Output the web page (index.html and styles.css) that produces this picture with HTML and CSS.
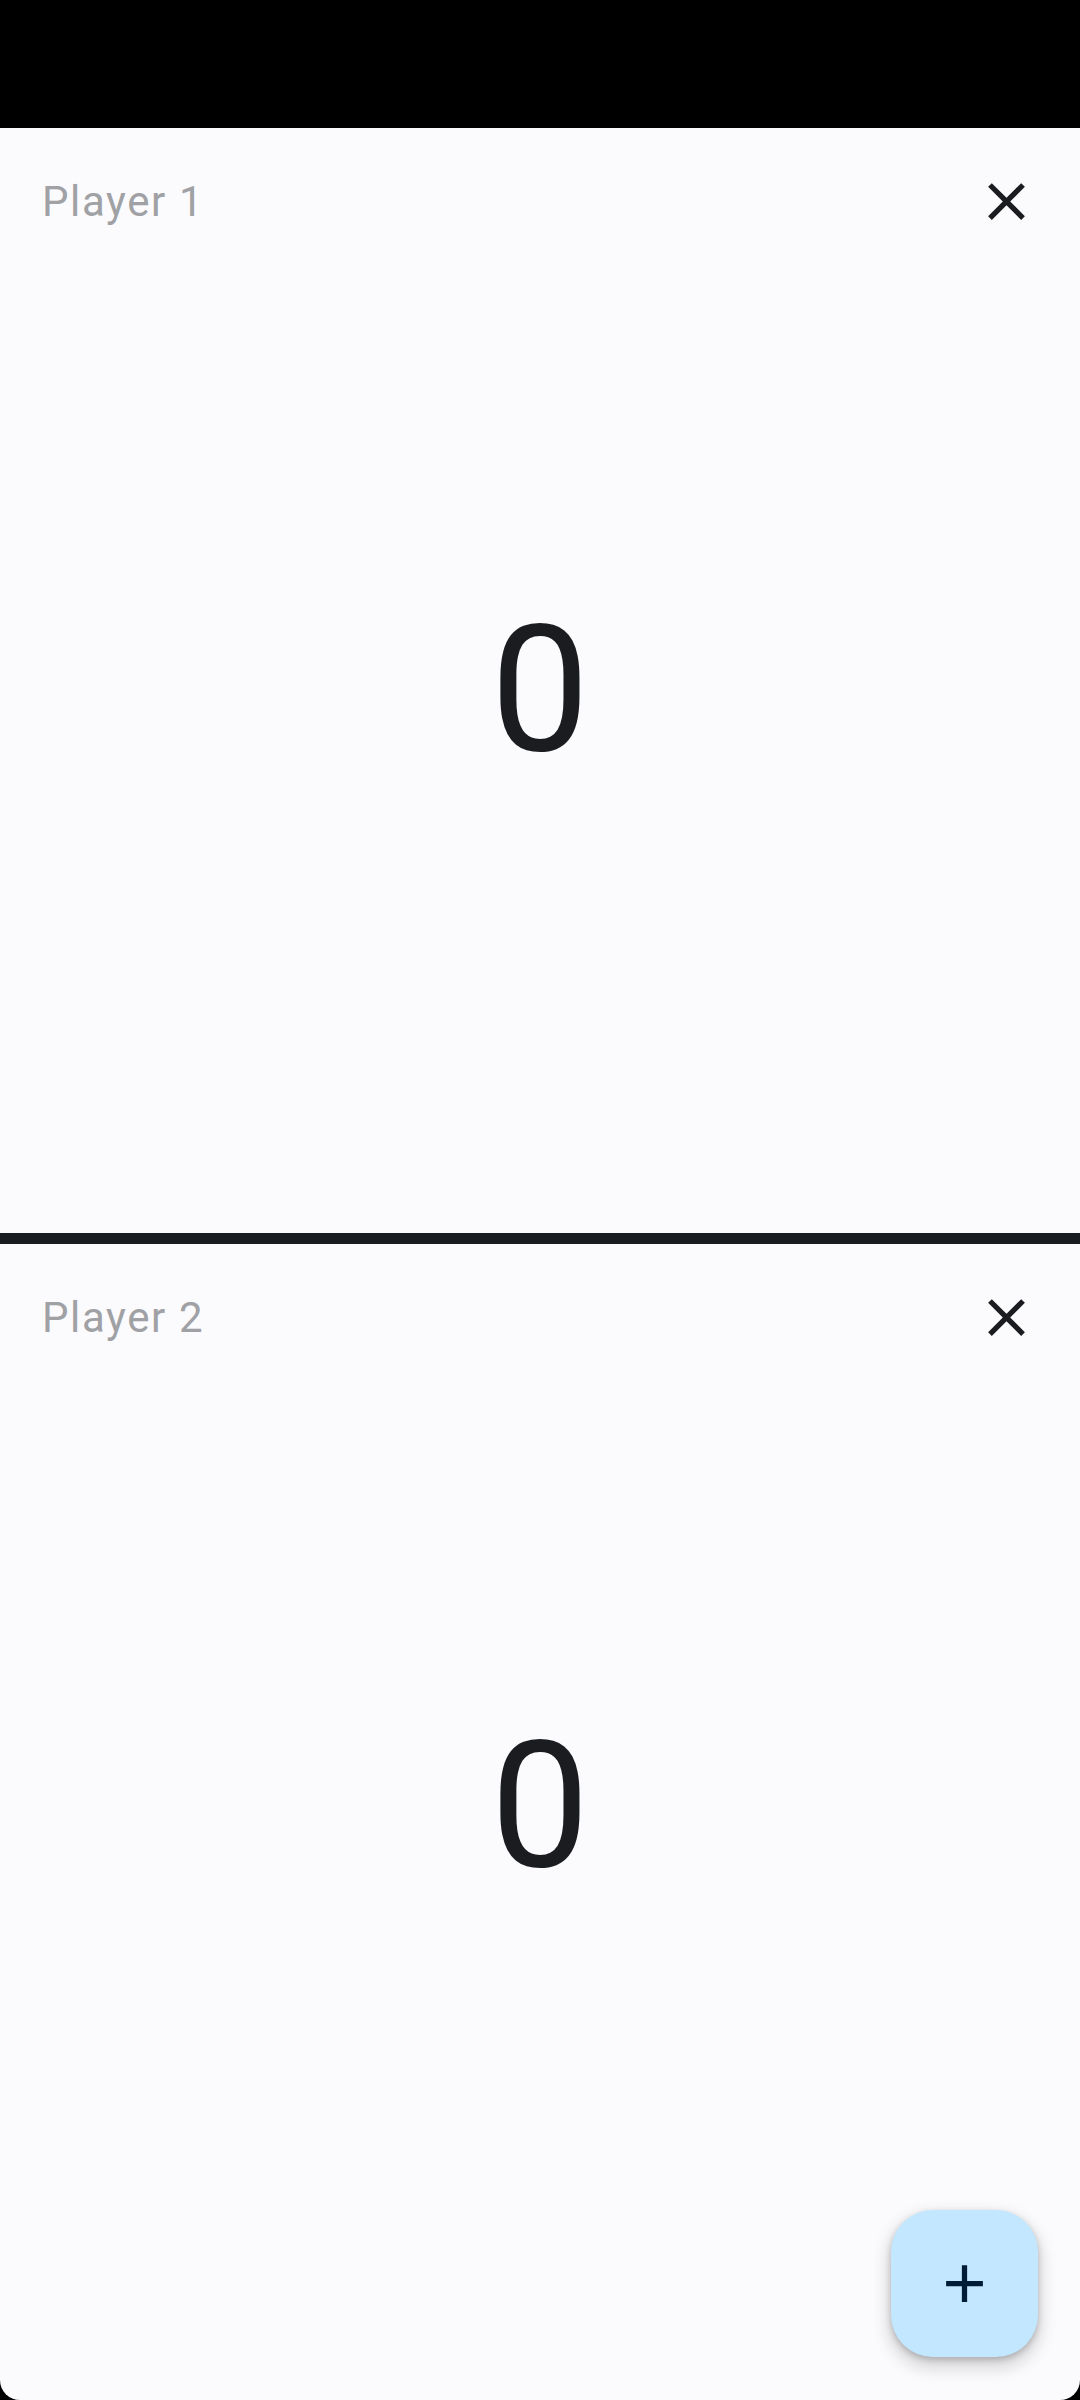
FILE: index.html
```html
<!DOCTYPE html>
<html lang="en">
<head>
<meta charset="utf-8">
<title>Score Counter</title>
<link rel="stylesheet" href="styles.css">
</head>
<body>
<div class="status-bar"></div>
<main class="app">
  <section class="panel">
    <header class="panel-header">
      <span class="player-name">Player 1</span>
      <button class="icon-btn" aria-label="Remove player">
        <svg viewBox="0 0 24 24" width="63" height="63"><path fill="#1a1c1f" d="M19 6.41L17.59 5 12 10.59 6.41 5 5 6.41 10.59 12 5 17.59 6.41 19 12 13.41 17.59 19 19 17.59 13.41 12z"/></svg>
      </button>
    </header>
    <div class="score">0</div>
  </section>
  <div class="divider"></div>
  <section class="panel">
    <header class="panel-header">
      <span class="player-name">Player 2</span>
      <button class="icon-btn" aria-label="Remove player">
        <svg viewBox="0 0 24 24" width="63" height="63"><path fill="#1a1c1f" d="M19 6.41L17.59 5 12 10.59 6.41 5 5 6.41 10.59 12 5 17.59 6.41 19 12 13.41 17.59 19 19 17.59 13.41 12z"/></svg>
      </button>
    </header>
    <div class="score">0</div>
  </section>
  <div class="nav-inset"></div>
  <button class="fab" aria-label="Add player">
    <svg viewBox="0 0 24 24" width="63" height="63"><path fill="#001d35" d="M19 13h-6v6h-2v-6H5v-2h6V5h2v6h6v2z"/></svg>
  </button>
</main>
</body>
</html>
```

FILE: styles.css
```css
* {
  box-sizing: border-box;
}

html, body {
  margin: 0;
  padding: 0;
  background: #000;
}

body {
  width: 1080px;
  height: 2400px;
  overflow: hidden;
  font-family: Roboto, "Noto Sans", "Liberation Sans", sans-serif;
  display: flex;
  flex-direction: column;
}

.status-bar {
  height: 128px;
  background: #000;
  flex: none;
}

.app {
  position: relative;
  flex: 1;
  display: flex;
  flex-direction: column;
  background: #fbfbfe;
  border-radius: 0 0 20px 20px;
  overflow: hidden;
}

.panel {
  height: 1105px;
  flex: none;
  display: flex;
  flex-direction: column;
}

.panel-header {
  display: flex;
  align-items: center;
  justify-content: space-between;
  padding: 42px 42px 0 42px;
  height: 105px;
}

.player-name {
  font-size: 42px;
  color: #a0a1a4;
  line-height: 63px;
  letter-spacing: 1.6px;
}

.icon-btn {
  width: 63px;
  height: 63px;
  padding: 0;
  border: 0;
  background: transparent;
  display: flex;
  align-items: center;
  justify-content: center;
}

.icon-btn svg,
.fab svg {
  display: block;
}

.score {
  flex: 1;
  display: flex;
  align-items: center;
  justify-content: center;
  padding-bottom: 87px;
  font-size: 176px;
  font-weight: 400;
  color: #1a1c1f;
  line-height: 1;
}

.divider {
  height: 11px;
  flex: none;
  background: #191c20;
}

.nav-inset {
  flex: 1;
}

.fab {
  position: absolute;
  right: 42px;
  bottom: 43px;
  width: 147px;
  height: 147px;
  border: 0;
  padding: 0;
  border-radius: 42px;
  background: #c2e7ff;
  display: flex;
  align-items: center;
  justify-content: center;
  box-shadow: 0 8px 16px 4px rgba(0, 0, 0, 0.14), 0 3px 6px rgba(0, 0, 0, 0.2);
}
```
